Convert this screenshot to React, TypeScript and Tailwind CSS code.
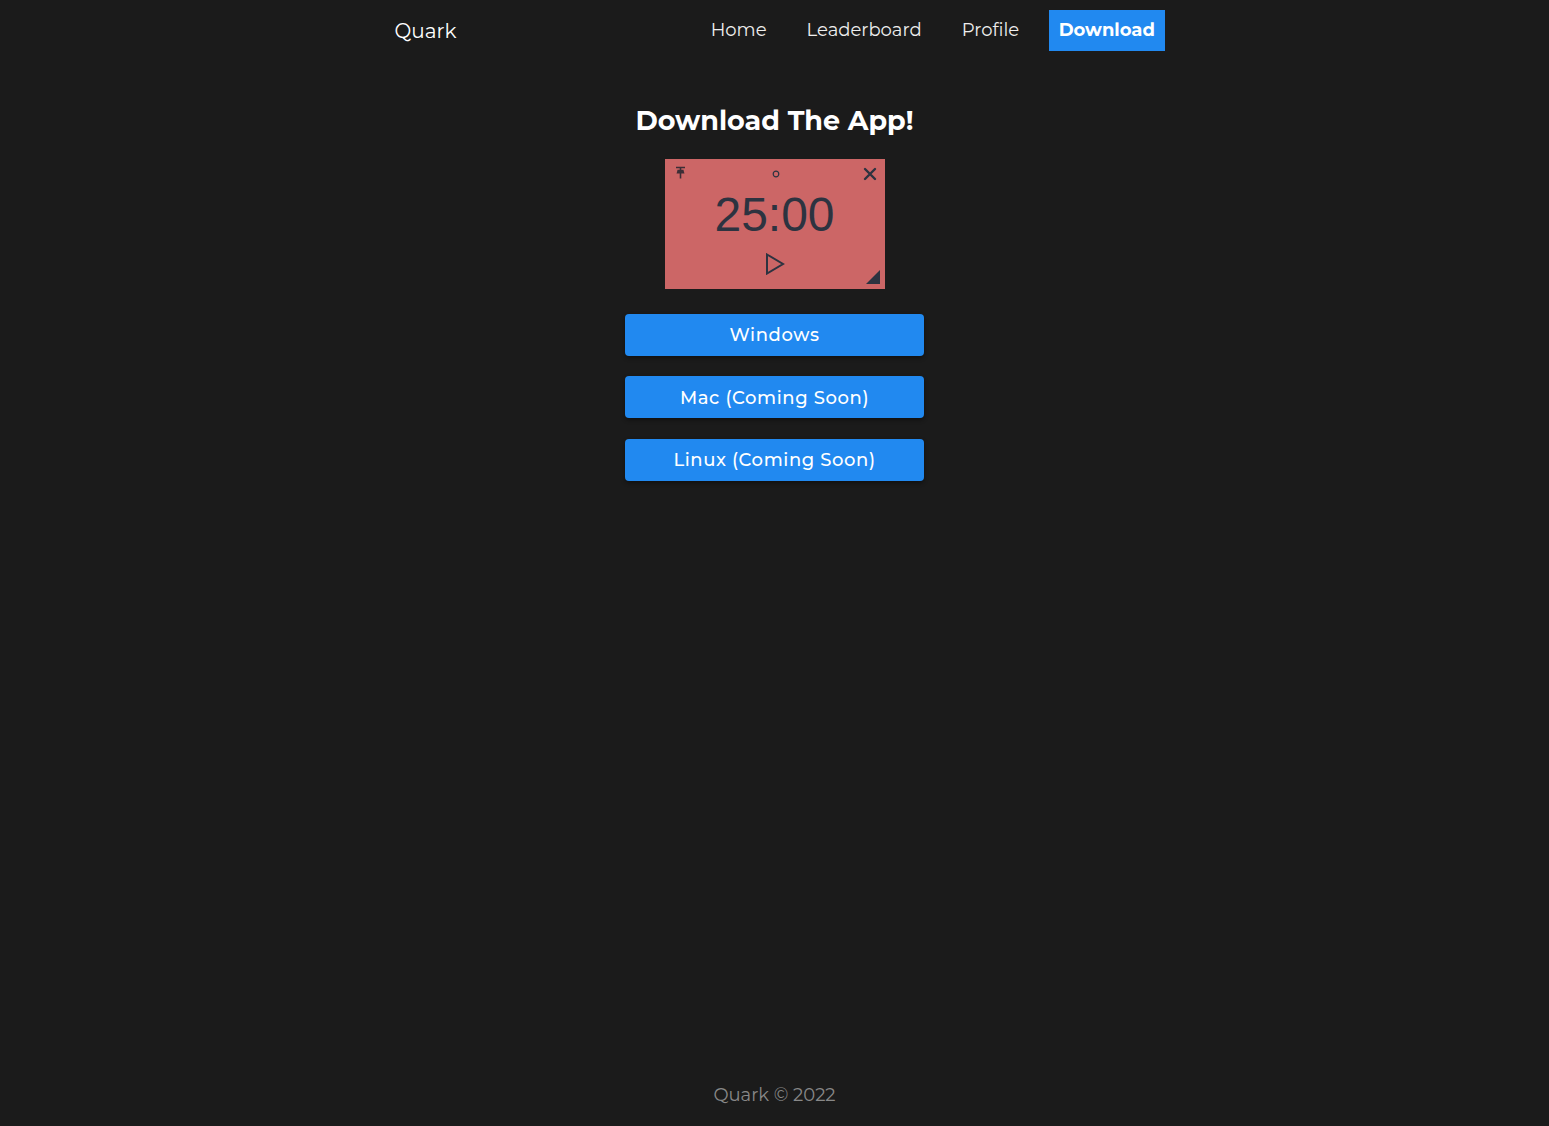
import type { ReactNode } from 'react';

const FONT = "font-['Montserrat','Open_Sans','Noto_Sans',sans-serif]";

function NavLink({ children, active }: { children: ReactNode; active?: boolean }) {
  return (
    <a
      href="#"
      className={`flex h-[41px] items-center text-[18px] ${
        active ? 'bg-[#2189f0] px-[9.5px] font-bold text-white' : 'px-5 text-[#eeeeee]'
      }`}
    >
      {children}
    </a>
  );
}

function TimerPreview() {
  return (
    <div className="relative flex h-[130px] w-[220px] flex-col items-center bg-[#cc6666] text-[#2d3340]">
      {/* pin */}
      <svg className="absolute left-[10px] top-[7px]" width="11" height="14" viewBox="0 0 11 14">
        <path d="M1 1.5h9M2.5 4.5h6M5.5 1.5v11" stroke="#3c2e36" strokeWidth="1.6" fill="none" />
        <path d="M2.5 4.5l-1 3h8l-1-3z" fill="#3c2e36" />
      </svg>
      {/* circle */}
      <svg className="absolute left-[107px] top-[11px]" width="8" height="8" viewBox="0 0 8 8">
        <circle cx="4" cy="4" r="2.8" stroke="#2d3340" strokeWidth="1.2" fill="none" />
      </svg>
      {/* close */}
      <svg className="absolute right-[8px] top-[8px]" width="14" height="14" viewBox="0 0 14 14">
        <path d="M2 2l10 10M12 2L2 12" stroke="#2d3340" strokeWidth="2.4" strokeLinecap="round" />
      </svg>
      <div className="mt-[32px] font-['Liberation_Sans',Arial,sans-serif] text-[48px] leading-none">
        25:00
      </div>
      {/* play */}
      <svg className="mt-[14px]" width="20" height="22" viewBox="0 0 20 22">
        <path d="M2 1.5L18 11L2 20.5z" stroke="#2d3340" strokeWidth="2" fill="none" strokeLinejoin="miter" />
      </svg>
      {/* resize grip */}
      <svg className="absolute bottom-[5px] right-[5px]" width="14" height="14" viewBox="0 0 14 14">
        <path d="M14 0V14H0z" fill="#2d3340" />
      </svg>
    </div>
  );
}

function DownloadButton({ label }: { label: string }) {
  return (
    <button className="h-[42px] w-[299px] rounded-[4px] bg-[#2189f0] pt-[2px] text-[18px] font-medium tracking-[0.6px] text-white shadow-[0_2px_4px_rgba(0,0,0,0.4)]">
      {label}
    </button>
  );
}

export default function App() {
  return (
    <div className={`flex min-h-[1126px] flex-col bg-[#1b1b1b] ${FONT}`}>
      {/* Header */}
      <nav className="mx-auto flex h-[60px] w-[780px] items-center justify-between pl-[10px]">
        <span className="mt-[2px] text-[20px] text-white">Quark</span>
        <div className="flex items-center">
          <NavLink>Home</NavLink>
          <NavLink>Leaderboard</NavLink>
          <NavLink>Profile</NavLink>
          <div className="w-[10px]" />
          <NavLink active>Download</NavLink>
        </div>
      </nav>

      {/* Main */}
      <main className="flex flex-1 flex-col items-center">
        <h1 className="mt-[41px] text-[27px] font-bold text-white">Download The App!</h1>
        <div className="mt-[17px]">
          <TimerPreview />
        </div>
        <div className="mt-[25px] flex flex-col gap-[20.5px]">
          <DownloadButton label="Windows" />
          <DownloadButton label="Mac (Coming Soon)" />
          <DownloadButton label="Linux (Coming Soon)" />
        </div>
      </main>

      {/* Footer */}
      <footer className="pb-[17px] text-center text-[18px] text-[#888888]">Quark © 2022</footer>
    </div>
  );
}
